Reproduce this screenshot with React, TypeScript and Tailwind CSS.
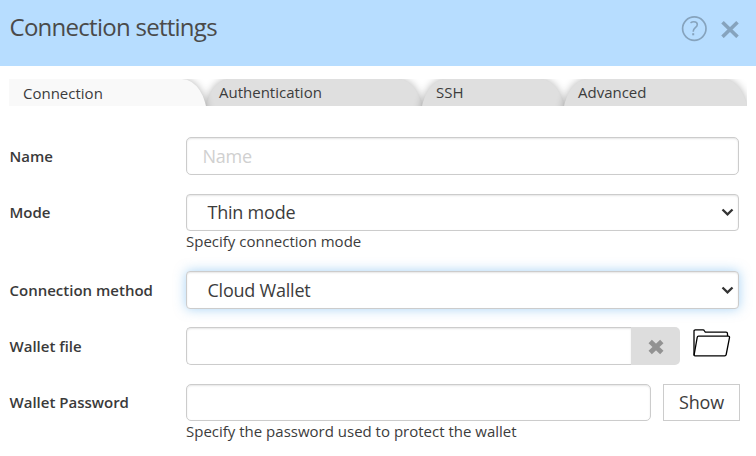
import type { ReactNode } from 'react';

function Row({ label, gap, pad = 'pt-[9px]', children }: { label: string; gap: string; pad?: string; children: ReactNode }) {
  return (
    <div className={`flex items-start ${gap}`}>
      <span className={`w-[176.5px] shrink-0 text-[15px] leading-5 font-semibold text-[#3a3a3a] ${pad}`}>{label}</span>
      <div className="flex-1">{children}</div>
    </div>
  );
}

function Select({ value, className }: { value: string; className: string }) {
  return (
    <button className={`flex w-[553px] items-center justify-between rounded-[4px] border border-[#ccc] bg-white pr-[4.5px] pl-[20.5px] text-[18px] tracking-[-0.22px] text-[#3c3c3c] ${className}`}>
      <span className="leading-6">{value}</span>
      <svg width="13" height="10" viewBox="0 0 13 10" fill="none" stroke="#333" strokeWidth="2.3">
        <path d="M1.5 2.5 6.5 7.3 11.5 2.5" />
      </svg>
    </button>
  );
}

const tabs = [
  { name: 'Authentication', box: 'w-[218px] pl-[14px]' },
  { name: 'SSH', box: 'w-[144px] pl-[15px]' },
  { name: 'Advanced', box: 'w-[185px] pl-[15px]' },
];

export default function App() {
  return (
    <div className="h-[456px] w-[756px] overflow-hidden bg-white font-['Open_Sans',sans-serif] text-[#3c3c3c]">
      <header className="flex h-[66px] items-start justify-between bg-[#b7ddff] pr-[17px] pl-[9.5px]">
        <h1 className="pt-[11px] text-[24px] leading-8 tracking-[-0.73px] text-[#4a4a4a]">Connection settings</h1>
        <div className="flex items-center gap-[14px] pt-[16px]">
          <svg width="26" height="26" viewBox="0 0 26 26" fill="none" stroke="#86a3bd">
            <circle cx="13.3" cy="12.6" r="11.7" strokeWidth="1.7" />
            <path d="M9.5 6.9c1.1-.8 2.2-1.1 3.4-1.1 2 0 3.4 1.1 3.4 2.8 0 3.1-4 3.2-4 6.5v.6" strokeWidth="1.6" />
            <path d="M12.2 17.2v2.1" strokeWidth="2" />
          </svg>
          <svg width="18" height="18" viewBox="0 0 18 18" stroke="#86a3bd" strokeWidth="3.6">
            <path d="m1.5 2.3 15 14.5M16.5 2.3l-15 14.5" />
          </svg>
        </div>
      </header>

      <nav className="mt-[13px] ml-[9px] flex h-[27px] w-[738px] items-start overflow-hidden text-[15px]">
        <div className="relative z-10 h-10 w-[198px] shrink-0 rounded-tr-[25px_38px] bg-[#f9f9f9] pt-[4px] pl-[14px] leading-5 shadow-[0_0_8px_rgba(0,0,0,0.3)]">Connection</div>
        {tabs.map((t) => (
          <div key={t.name} className={`relative -ml-[2px] h-10 shrink-0 rounded-t-[25px_38px] bg-[#dfdfdf] pt-[3px] leading-5 shadow-[0_0_8px_rgba(0,0,0,0.3)] ${t.box}`}>
            {t.name}
          </div>
        ))}
      </nav>

      <main className="pl-[9.5px]">
        <Row label="Name" gap="mt-[31px]">
          <input placeholder="Name" className="block h-[38px] w-[553px] rounded-[5px] border border-[#ccc] px-[15.5px] text-[18px] tracking-[-0.22px] shadow-[inset_0_1px_2px_rgba(0,0,0,0.1)] placeholder:text-[#d0d0d0]" />
        </Row>
        <Row label="Mode" gap="mt-[19px]" pad="pt-[8px]">
          <Select value="Thin mode" className="h-[37px] pb-px shadow-[inset_0_1px_2px_rgba(0,0,0,0.1)]" />
          <p className="text-[15px] leading-[21px]">Specify connection mode</p>
        </Row>
        <Row label="Connection method" gap="mt-[19px]">
          <Select value="Cloud Wallet" className="h-[38px] shadow-[inset_0_1px_2px_rgba(0,0,0,0.1),0_0_12px_rgba(82,168,236,0.5)]" />
        </Row>
        <Row label="Wallet file" gap="mt-[18px]">
          <div className="flex h-[38px]">
            <input className="w-[445px] rounded-l-[5px] border border-r-0 border-[#ccc] shadow-[inset_0_1px_2px_rgba(0,0,0,0.1)]" />
            <button className="flex w-[49px] items-center justify-center rounded-r-[5px] bg-[#ddd]">
              <svg width="16" height="16" viewBox="0 0 16 16" stroke="#929292" strokeWidth="4.8" className="mt-[2px]">
                <path d="m2.2 2.4 11.6 11.2M13.8 2.4 2.2 13.6" />
              </svg>
            </button>
            <svg width="38" height="29" viewBox="0 0 38 29" className="mt-[2px] ml-[13px]" fill="none" stroke="#000" strokeWidth="1.3" strokeLinejoin="round">
              <path d="M1 26.5V2Q1 .9 2.3 .9H10Q11 .9 11.5 2L12.3 3.2H33Q34.5 3.2 34.5 4.7V7" />
              <path d="M5.5 7.2H35.3Q36.8 7.2 36.5 8.7L33.2 25.5Q32.9 26.8 31.7 26.8H2Q1 26.8 1.2 25.5L4.2 8.4Q4.4 7.2 5.5 7.2Z" />
            </svg>
          </div>
        </Row>
        <Row label="Wallet Password" gap="mt-[19px]" pad="pt-[8px]">
          <div className="flex h-[37px] gap-[12px]">
            <input type="password" className="w-[465px] rounded-[5px] border border-[#ccc] shadow-[inset_0_1px_2px_rgba(0,0,0,0.1)]" />
            <button className="w-[77px] border border-[#ccc] pb-px text-[18px] leading-6 tracking-[-0.22px]">Show</button>
          </div>
          <p className="text-[15px] leading-[21px]">Specify the password used to protect the wallet</p>
        </Row>
      </main>
    </div>
  );
}
